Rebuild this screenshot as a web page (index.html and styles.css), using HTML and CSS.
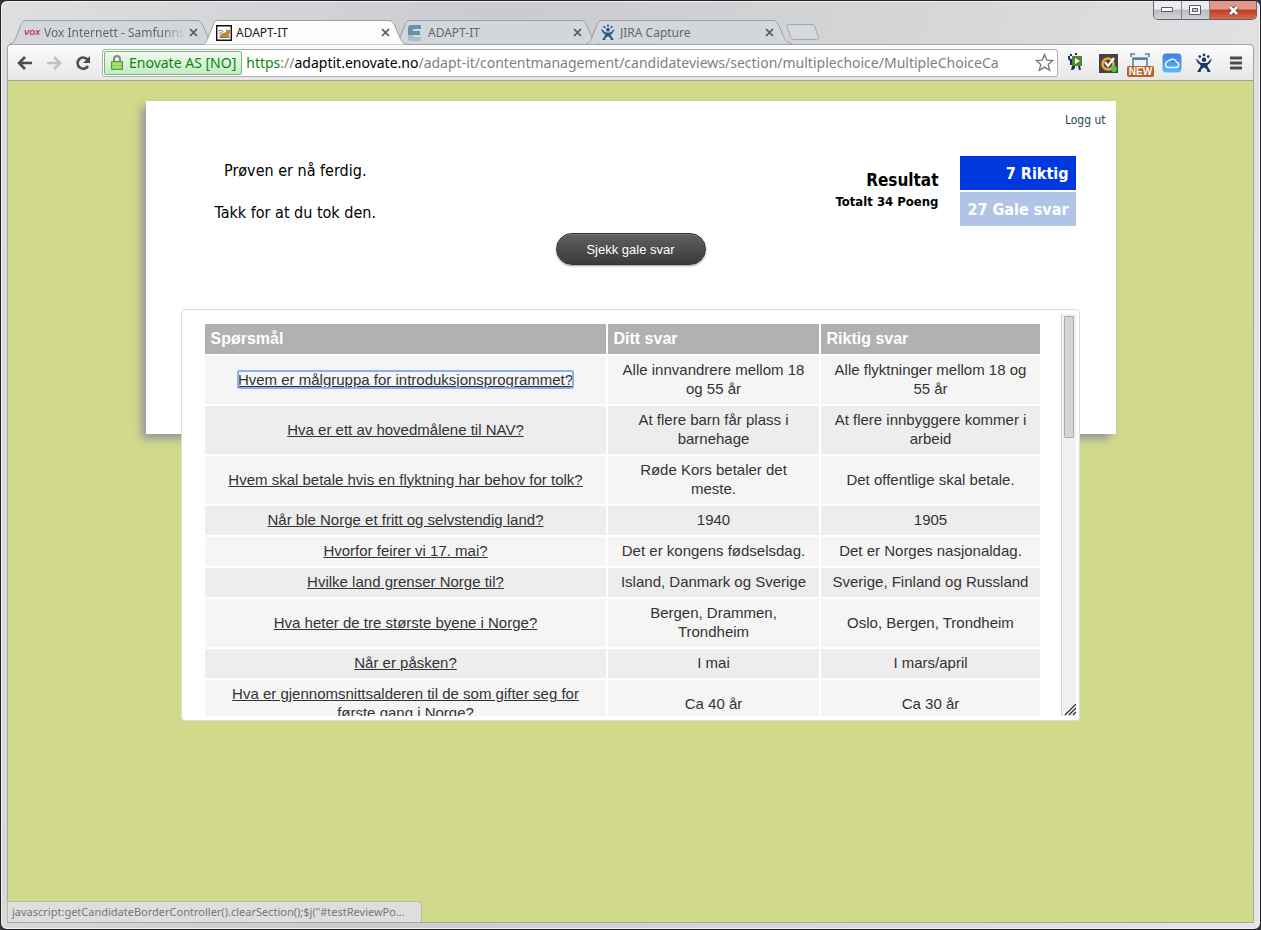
FILE: index.html
```html
<!DOCTYPE html>
<html lang="no">
<head>
<meta charset="utf-8">
<title>ADAPT-IT</title>
<link rel="stylesheet" href="styles.css">
</head>
<body>
<svg class="defs" aria-hidden="true">
  <symbol id="tab-shape" viewBox="0 0 206 25" preserveAspectRatio="none">
    <path d="M0 24.5 C4 24 4 22 6 18 L11 5 C12.500 1.500 13 .5 17 .5 H186 C190 .5 191 2 192.500 5 L198 18 C200 22 201 24 206 24.500" stroke="#9b9ea3"/>
  </symbol>
  <symbol id="cross" viewBox="0 0 9 9"><path d="M1 1l7 7M8 1L1 8" stroke="#555" stroke-width="1.700" fill="none"/></symbol>
  <symbol id="jira" viewBox="0 0 16 18">
    <path d="M1 5c2 1 3 4 5 4h4c2 0 3-3 5-4-.5 3-2 5-4 6 0 2 2 3 3 6h-3c0-2-1-3-3-4-2 1-3 2-3 4H2c1-3 3-4 3-6-2-1-4-3-4-6z"/>
    <circle cx="8" cy="6" r="2"/><circle cx="4.200" cy="3.200" r="1.200"/><circle cx="8" cy="1.700" r="1.200"/><circle cx="11.800" cy="3.200" r="1.200"/>
  </symbol>
</svg>
<div class="window">
  <header class="titlebar">
    <nav class="tabs">
      <div class="tab">
        <svg class="tab-bg"><use href="#tab-shape"/></svg>
        <span class="tab-icon vox">VOX</span>
        <span class="tab-title fade">Vox Internett - Samfunnsk</span>
        <button class="tab-close" aria-label="Close tab"><svg width="9" height="9"><use href="#cross"/></svg></button>
      </div>
      <div class="tab active">
        <svg class="tab-bg"><use href="#tab-shape"/></svg>
        <span class="tab-icon"><svg width="16" height="16" viewBox="0 0 16 16"><path d="M.7.700h14.600v14.600H.7z" fill="#fff" stroke="#111" stroke-width="1.400"/><path d="M3 12l2-3 2-1 3-1V4l1 1h2l1-1v4l-1 2 1 3H9l-2-1-2 1z" fill="#bd8a3a"/><path d="M2.500 6l3-1 2 2M3 9l3-2M4 12.500h8" stroke="#777" fill="none"/></svg></span>
        <span class="tab-title">ADAPT-IT</span>
        <button class="tab-close" aria-label="Close tab"><svg width="9" height="9"><use href="#cross"/></svg></button>
      </div>
      <div class="tab">
        <svg class="tab-bg"><use href="#tab-shape"/></svg>
        <span class="tab-icon"><svg width="14" height="16" viewBox="0 0 14 16"><path d="M3 0h10v4H5v2h7v4H0V3q0-3 3-3z" fill="#6493a3"/><path d="M0 10h5v2h8v4H3q-3 0-3-3z" fill="#a7bdc8"/></svg></span>
        <span class="tab-title">ADAPT-IT</span>
        <button class="tab-close" aria-label="Close tab"><svg width="9" height="9"><use href="#cross"/></svg></button>
      </div>
      <div class="tab">
        <svg class="tab-bg"><use href="#tab-shape"/></svg>
        <span class="tab-icon"><svg width="16" height="17" fill="#2e5783"><use href="#jira"/></svg></span>
        <span class="tab-title">JIRA Capture</span>
        <button class="tab-close" aria-label="Close tab"><svg width="9" height="9"><use href="#cross"/></svg></button>
      </div>
      <button class="new-tab" aria-label="New tab"><svg width="33" height="17" viewBox="0 0 33 17"><path d="M3 .5h23q2 0 3 2l3.500 11q.5 2-2 2H8q-2 0-3-2L1 3Q0 .5 3 .5z" fill="#d5d9de" stroke="#a3a6aa"/></svg></button>
    </nav>
    <div class="window-buttons">
      <button class="win" aria-label="Minimize"><svg width="13" height="6"><path d="M.5.500h11v4H.5z" fill="#fff" stroke="#555a66"/></svg></button>
      <button class="win" aria-label="Restore"><svg width="13" height="11"><path d="M.5.500h11v9H.5z" fill="#fff" stroke="#555a66"/><path d="M3.500 3.500h5v3h-5z" fill="#ccc" stroke="#555a66"/></svg></button>
      <button class="win close" aria-label="Close"><svg width="13" height="11"><path d="M3 2l7 7M10 2L3 9" stroke="#5c4550" stroke-width="4.500"/><path d="M3 2l7 7M10 2L3 9" stroke="#fff" stroke-width="2.600"/></svg></button>
    </div>
  </header>

  <div class="toolbar">
    <button class="nav" aria-label="Back"><svg width="16" height="14"><path d="M8 1L2 7l6 6M2 7h13" fill="none" stroke="#4d4d4d" stroke-width="2.600"/></svg></button>
    <button class="nav" aria-label="Forward"><svg width="16" height="14"><path d="M8 1l6 6-6 6M14 7H1" fill="none" stroke="#c3c3c3" stroke-width="2.600"/></svg></button>
    <button class="nav reload" aria-label="Reload"><svg width="16" height="16"><path d="M12.500 4.500A5.600 5.600 0 1 0 13 11" fill="none" stroke="#4d4d4d" stroke-width="2.600"/><path d="M15 1v7H8z" fill="#4d4d4d"/></svg></button>
    <div class="omnibox">
      <span class="cert"><svg width="12" height="15"><path d="M3 7V4q0-3 3-3t3 3v3" fill="none" stroke="#8a8a8a" stroke-width="2"/><path d="M.5 6.500h11v8H.5z" fill="#8fd35f" stroke="#539b3b"/><path d="M2 9h8M2 12h8" stroke="#b9ea94"/></svg>Enovate AS [NO]</span>
      <a class="url" href="#"><span class="scheme">https</span>://<span class="host">adaptit.enovate.no</span>/adapt-it/contentmanagement/candidateviews/section/multiplechoice/MultipleChoiceCa</a>
      <button class="star" aria-label="Bookmark"><svg width="19" height="19" viewBox="0 0 19 19"><path d="M9.500 1.500l2.300 5.600 6 .4-4.600 3.900 1.500 5.900-5.200-3.200-5.200 3.200 1.500-5.900L1.200 7.500l6-.4z" fill="#fff" stroke="#777" stroke-width="1.300"/></svg></button>
    </div>
    <div class="extensions">
      <button aria-label="Capture"><svg width="20" height="20"><path d="M4 1h2v2H4zM9 0h2v2H9zM2 3h2v3h2v6H4V8L2 6zM6 13h3v2l-2 2H5zM12 13h2l1 4h-2z" fill="#14315c"/><path d="M6 3h10v10H6z" fill="#4c8b2b"/><path d="M9 5l5 3-5 3z" fill="#fff"/></svg></button>
      <button aria-label="Safety check"><svg width="20" height="20"><path d="M1 1h19v19H1z" fill="#47443f"/><circle cx="10" cy="11" r="5.500" fill="none" stroke="#eeaa35" stroke-width="2.500"/><path d="M7 9l3 4 6-8" fill="none" stroke="#fff" stroke-width="2.200"/><circle cx="16" cy="16" r="3" fill="#3fd13b"/></svg></button>
      <button class="badge-host" aria-label="Screenshot"><svg width="20" height="20"><path d="M1 4V1h4M15 1h4v3M3 14V5h14v9" fill="none" stroke="#4e86ad" stroke-width="1.600"/><path d="M3 5h14v2H3z" fill="#4e86ad"/></svg><span class="badge">NEW</span></button>
      <button aria-label="Cloud"><svg width="20" height="20"><defs><linearGradient id="sky" x2="0" y2="1"><stop stop-color="#3d7ee9"/><stop offset="1" stop-color="#58bdf7"/></linearGradient></defs><rect x=".5" y=".5" width="19" height="19" rx="4" fill="url(#sky)"/><path d="M6 14.500a3 3 0 0 1-.5-5.800 2.500 2.500 0 0 1 2.500-1.500 4 4 0 0 1 6.500 2 2.700 2.700 0 0 1 0 5.300z" fill="none" stroke="#fff" stroke-width="1.300"/></svg></button>
      <button aria-label="JIRA"><svg width="18" height="20" fill="#16396a"><use href="#jira"/></svg></button>
      <button aria-label="Menu"><svg width="14" height="14"><path d="M1 2h12M1 7h12M1 12h12" stroke="#4c4c4c" stroke-width="3"/></svg></button>
    </div>
  </div>

  <main class="page">
    <section class="card">
      <a class="logout" href="#">Logg ut</a>
      <div class="summary">
        <div class="message"><p>Prøven er nå ferdig.</p><p>Takk for at du tok den.</p></div>
        <div class="score">
          <div class="total"><h1>Resultat</h1><p>Totalt 34 Poeng</p></div>
          <div class="boxes"><div class="right">7 Riktig</div><div class="wrong">27 Gale svar</div></div>
        </div>
      </div>
      <button class="check">Sjekk gale svar</button>

      <div class="popup">
        <div class="list">
          <table>
            <colgroup><col><col class="yours"><col class="correct"></colgroup>
            <thead><tr><th>Spørsmål</th><th>Ditt svar</th><th>Riktig svar</th></tr></thead>
            <tbody>
              <tr><td><a class="focused" href="#">Hvem er målgruppa for introduksjonsprogrammet?</a></td><td>Alle innvandrere mellom 18 og 55 år</td><td>Alle flyktninger mellom 18 og 55 år</td></tr>
              <tr><td><a href="#">Hva er ett av hovedmålene til NAV?</a></td><td>At flere barn får plass i barnehage</td><td>At flere innbyggere kommer i arbeid</td></tr>
              <tr><td><a href="#">Hvem skal betale hvis en flyktning har behov for tolk?</a></td><td>Røde Kors betaler det meste.</td><td>Det offentlige skal betale.</td></tr>
              <tr><td><a href="#">Når ble Norge et fritt og selvstendig land?</a></td><td>1940</td><td>1905</td></tr>
              <tr><td><a href="#">Hvorfor feirer vi 17. mai?</a></td><td>Det er kongens fødselsdag.</td><td>Det er Norges nasjonaldag.</td></tr>
              <tr><td><a href="#">Hvilke land grenser Norge til?</a></td><td>Island, Danmark og Sverige</td><td>Sverige, Finland og Russland</td></tr>
              <tr><td><a href="#">Hva heter de tre største byene i Norge?</a></td><td>Bergen, Drammen, Trondheim</td><td>Oslo, Bergen, Trondheim</td></tr>
              <tr><td><a href="#">Når er påsken?</a></td><td>I mai</td><td>I mars/april</td></tr>
              <tr><td><a href="#">Hva er gjennomsnittsalderen til de som gifter seg for første gang i Norge?</a></td><td>Ca 40 år</td><td>Ca 30 år</td></tr>
            </tbody>
          </table>
        </div>
        <div class="scrollbar"><div class="thumb"></div><svg class="grip" width="12" height="12"><path d="M1 11L12 0M5 11l7-7M9 11l3-3" stroke="#222" stroke-width="1.200"/></svg></div>
      </div>
    </section>
    <div class="status">javascript:getCandidateBorderController().clearSection();$j("#testReviewPo...</div>
  </main>
</div>
</body>
</html>
```
FILE: styles.css
```css
* { box-sizing: border-box; }
body { margin: 0; background: #33333a; font-family: "Liberation Sans", Arial, sans-serif; }
button { margin: 0; padding: 0; border: 0; background: none; font: inherit; }
svg { display: block; }
p, h1 { margin: 0; }
.defs { position: absolute; width: 0; height: 0; }

.window {
  display: flex; flex-direction: column; min-height: 100vh;
  padding: 0 6px 6px; border: 1px solid #222226; border-radius: 7px;
  background: linear-gradient(100deg, #dedfe1, #c9cbce 35%, #d5d6d8 65%, #e6e6e7);
  box-shadow: inset 0 0 0 1px #f2f2f3;
}

/* Tab strip */
.titlebar { display: flex; justify-content: space-between; height: 43px; }
.tabs { display: flex; align-items: flex-end; padding-left: 3px; font: 12px "Noto Sans", sans-serif; color: #666; }
.tab { position: relative; display: flex; align-items: center; width: 206px; height: 24px; padding: 1px 18px 0 14px; }
.tab + .tab { margin-left: -14px; }
.tab-bg { position: absolute; inset: 0; width: 100%; height: 100%; fill: #d2d7de; }
.active { z-index: 1; height: 25px; margin-bottom: -1px; padding-top: 0; color: #222; }
.active .tab-bg { fill: #fcfcfc; }
.tab-icon { position: relative; flex: none; width: 20px; }
.vox { font: italic bold 7px "DejaVu Sans", sans-serif; color: #d23a5e; }
.tab-title { position: relative; flex: 1; overflow: hidden; white-space: nowrap; }
.fade { -webkit-mask-image: linear-gradient(90deg, #000 85%, transparent); mask-image: linear-gradient(90deg, #000 85%, transparent); }
.tab-close { position: relative; margin-left: 4px; }
.new-tab { align-self: flex-end; margin: 0 0 3px -6px; }

.window-buttons { display: flex; height: 19px; margin-right: -3px; border: 1px solid #62646a; border-top: 0; border-radius: 0 0 5px 5px; overflow: hidden; }
.win { display: grid; place-items: center; width: 28px; border-right: 1px solid #85878c; background: linear-gradient(#ececee 45%, #b9bbc0 50%, #d2d3d6); }
.win.close { width: 46px; border: 0; background: linear-gradient(#e2998b 45%, #bf3b20 50%, #d96a50); }

/* Toolbar */
.toolbar { display: flex; align-items: center; height: 37px; padding: 0 7px 0 9px; border: 1px solid #a3a4a6; border-bottom-color: #a0a0a0; border-radius: 4px 4px 0 0; background: linear-gradient(#fcfcfc, #e6e6e6); }
.nav { display: grid; place-items: center; width: 29px; height: 24px; justify-content: start; }
.reload { width: 27px; }
.omnibox { display: flex; align-items: center; flex: 1; min-width: 0; height: 28px; padding: 0 3px 0 1px; border: 1px solid #b0b0b0; border-radius: 3px; background: #fff; font: 14px "Noto Sans", sans-serif; }
.cert { display: flex; align-items: center; gap: 6px; flex: none; height: 24px; padding: 0 5px 0 6px; border: 1px solid #72bb72; border-radius: 2px; background: linear-gradient(#f1faf1, #c5eac5); color: #078a07; }
.url { flex: 1; min-width: 0; margin-left: 4px; overflow: hidden; white-space: nowrap; color: #808080; text-decoration: none; }
.scheme { color: #078a07; }
.host { color: #000; }
.extensions { display: flex; align-items: center; gap: 12px; margin-left: 8px; }
.extensions button { display: grid; place-items: center; width: 20px; height: 20px; }
.badge-host { position: relative; }
.badge { position: absolute; left: -3px; bottom: -4px; width: 27px; border-radius: 2px; background: #b5622a; color: #fff; font: bold 10px/11px "Liberation Sans", sans-serif; }

/* Page */
.page { position: relative; flex: 1; padding: 20px; border: 1px solid #a5a6a8; border-top: 0; background: #d1da8a; }
.card { position: relative; max-width: 970px; min-height: 333px; margin: 0 auto; padding: 12px 10px; background: #fff; box-shadow: -5px 5px 9px -1px #8f8f9b; font-family: "DejaVu Sans Condensed", "DejaVu Sans", sans-serif; }
.logout { display: block; text-align: right; font-size: 12px; line-height: 14px; color: #1f474c; text-decoration: none; }
.summary { display: flex; justify-content: space-between; padding: 29px 30px 0 59px; }
.message { font-size: 16px; line-height: 20px; text-align: center; }
.message p { padding: 5px 0 17px; }
.message p + p { padding-bottom: 4px; }
.score { display: flex; gap: 22px; }
.total { padding-top: 14px; text-align: right; font-weight: bold; }
.total h1 { font-size: 17px; line-height: 20px; }
.total p { font-size: 13px; line-height: 23px; }
.boxes { display: grid; gap: 2px; align-content: start; font-size: 16px; font-weight: bold; line-height: 36px; text-align: right; color: #fff; }
.boxes div { height: 34px; padding: 0 7px; white-space: nowrap; }
.right { background: #0038e0; }
.wrong { background: #b0c4e8; }
.check { display: block; width: 150px; height: 32px; margin: 6px auto 0; border: 1px solid #333; border-radius: 16px; background: linear-gradient(#606060, #3b3b3b); box-shadow: 0 1px 2px #999, inset 0 1px 0 #777; color: #fff; font: 13px "Liberation Sans", Arial, sans-serif; }

/* Answer review */
.popup { position: absolute; top: 208px; left: 35px; right: 36px; display: flex; height: 412px; padding: 4px 3px; border: 1px solid #dcdcdc; border-radius: 4px; background: #fff; font: 15px/19px "Liberation Sans", Arial, sans-serif; color: #333; }
.list { flex: 1; overflow: hidden; padding: 8px 19px 8px 18px; }
table { width: 100%; table-layout: fixed; border-spacing: 2px; }
.yours { width: 211px; }
.correct { width: 219px; }
th { padding: 5px 6px 6px; background: #b1b1b1; color: #fff; font-size: 16px; text-align: left; }
td { padding: 4px 8px 6px 9px; text-align: center; background: #ededed; }
tr:nth-child(odd) td { background: #f5f5f5; }
td a { color: #333; }
.focused { outline: 2px solid #8ab0f2; outline-offset: -1px; border-radius: 1px; }
.scrollbar { position: relative; width: 15px; padding: 2px; border-left: 1px solid #d5d5d5; background: #f1f1f1; }
.thumb { height: 122px; border: 1px solid #aaa; border-radius: 1px; background: #d6d6d6; }
.grip { position: absolute; right: 0; bottom: 0; }

.status { position: absolute; left: -1px; bottom: 0; min-width: 415px; height: 21px; padding: 0 8px 0 4px; border: 1px solid #b9bf88; border-bottom: 0; border-radius: 0 4px 0 0; background: #dedede; color: #777; font: 11px/20px "Noto Sans", sans-serif; }
```
